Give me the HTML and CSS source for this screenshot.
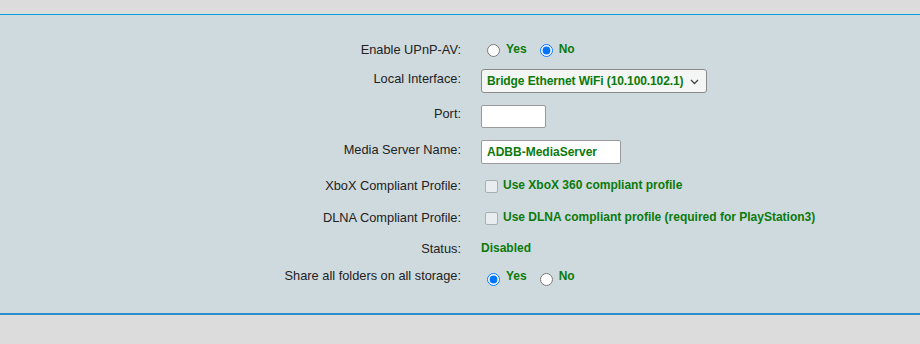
FILE: index.html
```html
<!DOCTYPE html>
<html lang="en">
<head>
  <meta charset="UTF-8" />
  <title>UPnP-AV</title>
  <link rel="stylesheet" href="styles.css">
</head>
<body>
  <div class="topbar"></div>
  <form class="panel">
    <label class="lbl">Enable UPnP-AV:</label>
    <div class="ctl">
      <input type="radio" name="upnp" id="upnpYes" /><label for="upnpYes" class="opt">Yes</label>
      <input type="radio" name="upnp" id="upnpNo" checked /><label for="upnpNo" class="opt">No</label>
    </div>

    <label class="lbl up">Local Interface:</label>
    <div class="ctl">
      <div class="selwrap">
        <select class="sel">
          <option>Bridge Ethernet WiFi (10.100.102.1)</option>
        </select>
        <svg class="chev" width="9" height="6" viewBox="0 0 9 6"><path d="M1 1l3.5 3.5L8 1" fill="none" stroke="#444" stroke-width="1.3"/></svg>
      </div>
    </div>

    <label class="lbl up">Port:</label>
    <div class="ctl"><input type="text" class="txt port" /></div>

    <label class="lbl up">Media Server Name:</label>
    <div class="ctl"><input type="text" class="txt name" value="ADBB-MediaServer" /></div>

    <label class="lbl">XboX Compliant Profile:</label>
    <div class="ctl">
      <input type="checkbox" class="chk" id="xbox" /><label for="xbox" class="opt">Use XboX 360 compliant profile</label>
    </div>

    <label class="lbl">DLNA Compliant Profile:</label>
    <div class="ctl">
      <input type="checkbox" class="chk" id="dlna" /><label for="dlna" class="opt">Use DLNA compliant profile (required for PlayStation3)</label>
    </div>

    <label class="lbl">Status:</label>
    <div class="ctl"><span class="opt">Disabled</span></div>

    <label class="lbl up">Share all folders on all storage:</label>
    <div class="ctl raised">
      <input type="radio" name="share" id="shareYes" checked /><label for="shareYes" class="opt">Yes</label>
      <input type="radio" name="share" id="shareNo" /><label for="shareNo" class="opt">No</label>
    </div>
  </form>
  <div class="bottombar"></div>
</body>
</html>
```

FILE: styles.css
```css
body {
  margin: 0;
  font-family: 'Liberation Sans', Arial, sans-serif;
  font-size: 12px;
  color: #222;
  background: #dcdcdc;
}
.topbar {
  height: 14px;
  background: #dcdcdc;
  border-bottom: 1px solid #0aa0e0;
}
.panel {
  background: #cfdadf;
  border-bottom: 2px solid #2a8fcb;
  padding: 19px 0 19px;
  display: grid;
  grid-template-columns: 461px 1fr;
  grid-template-rows: 30px 34px 36px 36px 30px 34px 28px 32px;
  column-gap: 20px;
  margin: 0;
}
.lbl {
  text-align: right;
  align-self: center;
  font-size: 12.8px;
}
.lbl.up {
  padding-bottom: 5px;
}
.ctl {
  display: flex;
  align-items: center;
}
.opt {
  color: #0b7a0b;
  font-weight: bold;
  margin-right: 7px;
}
.raised .opt {
  padding-bottom: 5px;
}
input[type=radio] {
  margin: 3px 6px 0 6px;
}
.selwrap {
  position: relative;
  display: flex;
}
.sel {
  appearance: none;
  font-family: inherit;
  font-size: 12px;
  font-weight: bold;
  letter-spacing: -0.1px;
  color: #0b7a0b;
  height: 24px;
  width: 226px;
  padding: 0 20px 0 5px;
  border: 1px solid #8a8a8a;
  border-radius: 3px;
  background: #f4f5f5;
}
.chev {
  position: absolute;
  right: 8px;
  top: 10px;
  pointer-events: none;
}
.txt {
  font-family: inherit;
  font-size: 12px;
  font-weight: bold;
  color: #0b7a0b;
  height: 24px;
  box-sizing: border-box;
  border: 1px solid #9a9a9a;
  border-radius: 2px;
  background: #fff;
  padding: 0 5px;
}
.port { width: 65px; height: 23px; }
.name { width: 140px; }
.chk {
  appearance: none;
  width: 13px;
  height: 13px;
  margin: 2px 5px 0 4px;
  border: 1px solid #a8aeb2;
  border-radius: 2px;
  background: #e9edef;
}
.bottombar {
  height: 30px;
}
```
